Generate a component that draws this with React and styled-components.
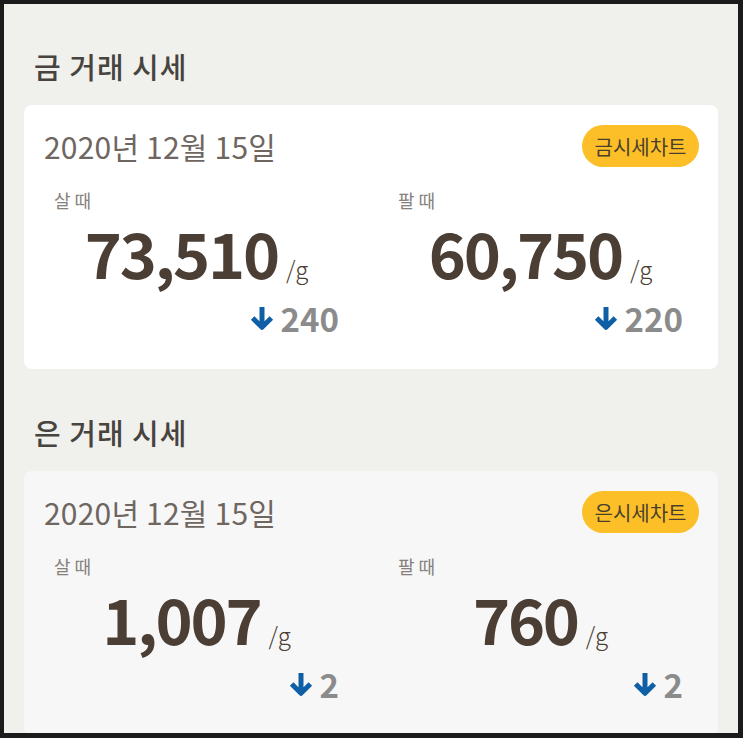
import React from "react";
import styled, { createGlobalStyle } from "styled-components";

const GlobalStyle = createGlobalStyle`
  html, body {
    margin: 0;
    padding: 0;
    background: #1b1b1b;
  }
  * {
    box-sizing: border-box;
  }
`;

const sections = [
  {
    title: "금 거래 시세",
    chart: "금시세차트",
    tone: "#ffffff",
    buy: { price: "73,510", diff: "240" },
    sell: { price: "60,750", diff: "220" },
  },
  {
    title: "은 거래 시세",
    chart: "은시세차트",
    tone: "#f7f7f7",
    buy: { price: "1,007", diff: "2" },
    sell: { price: "760", diff: "2" },
  },
];

const DownArrow = () => (
  <svg width="26" height="26" viewBox="0 0 25 25" aria-hidden="true">
    <path
      d="M12.5 2 V21 M3.5 12.5 L12.5 21.5 L21.5 12.5"
      fill="none"
      stroke="#0f5fa6"
      strokeWidth="4.8"
      strokeLinejoin="round"
    />
  </svg>
);

const PriceColumn = ({ label, price, diff }) => (
  <Column>
    <Label>{label}</Label>
    <PriceRow>
      <Price>{price}</Price>
      <Unit>/g</Unit>
    </PriceRow>
    <ChangeRow>
      <DownArrow />
      <Change>{diff}</Change>
    </ChangeRow>
  </Column>
);

const App = () => {
  return (
    <>
      <GlobalStyle />
      <Frame>
        {sections.map((s) => (
          <Section key={s.title}>
            <Title>{s.title}</Title>
            <Card $tone={s.tone}>
              <CardHeader>
                <DateText>2020년 12월 15일</DateText>
                <ChartButton>{s.chart}</ChartButton>
              </CardHeader>
              <Columns>
                <PriceColumn label="살 때" price={s.buy.price} diff={s.buy.diff} />
                <PriceColumn label="팔 때" price={s.sell.price} diff={s.sell.diff} />
              </Columns>
            </Card>
          </Section>
        ))}
      </Frame>
    </>
  );
};

const Frame = styled.div`
  width: 743px;
  height: 738px;
  border: 4px solid #1b1b1b;
  border-right-width: 5px;
  border-bottom-width: 5px;
  background-color: #f0f0ec;
  overflow: hidden;
  padding: 42px 20px 0 20px;
  display: flex;
  flex-direction: column;
  gap: 43px;
  font-family: "Noto Sans CJK KR", "Noto Sans", sans-serif;
`;

const Section = styled.section`
  display: flex;
  flex-direction: column;
`;

const Title = styled.h2`
  margin: 0 0 19px 10px;
  font-size: 29px;
  line-height: 40px;
  font-weight: 500;
  color: #47433e;
  letter-spacing: 1px;
`;

const Card = styled.div`
  background-color: ${(p) => p.$tone};
  border-radius: 8px;
  padding: 20px 19px 32px 20px;
  height: 264px;
  flex-shrink: 0;
`;

const CardHeader = styled.div`
  display: flex;
  justify-content: space-between;
  align-items: center;
  height: 42px;
`;

const DateText = styled.span`
  font-size: 30px;
  font-weight: 400;
  color: #6e665f;
  letter-spacing: 0.2px;
`;

const ChartButton = styled.span`
  display: inline-flex;
  align-items: center;
  justify-content: center;
  height: 42px;
  width: 117px;
  border-radius: 21px;
  background-color: #fcbf28;
  color: #4a3f2c;
  font-size: 20px;
  font-weight: 400;
`;

const Columns = styled.div`
  display: grid;
  grid-template-columns: 1fr 1fr;
  column-gap: 59px;
  padding: 0 16px 0 10px;
  margin-top: 21px;
`;

const Column = styled.div`
  display: flex;
  flex-direction: column;
`;

const Label = styled.span`
  font-size: 18px;
  line-height: 24px;
  color: #86817c;
`;

const PriceRow = styled.div`
  display: flex;
  justify-content: center;
  align-items: baseline;
  gap: 8px;
  margin-top: 2px;
  height: 76px;
`;

const Price = styled.span`
  font-size: 63px;
  line-height: 76px;
  font-weight: 700;
  color: #4b3f35;
  letter-spacing: -2.2px;
`;

const Unit = styled.span`
  font-size: 24px;
  font-weight: 300;
  color: #4b3f35;
`;

const ChangeRow = styled.div`
  display: flex;
  justify-content: flex-end;
  align-items: center;
  gap: 6px;
  margin-top: 8px;
`;

const Change = styled.span`
  font-size: 33px;
  line-height: 40px;
  font-weight: 700;
  color: #8b8b8b;
`;

export default App;
